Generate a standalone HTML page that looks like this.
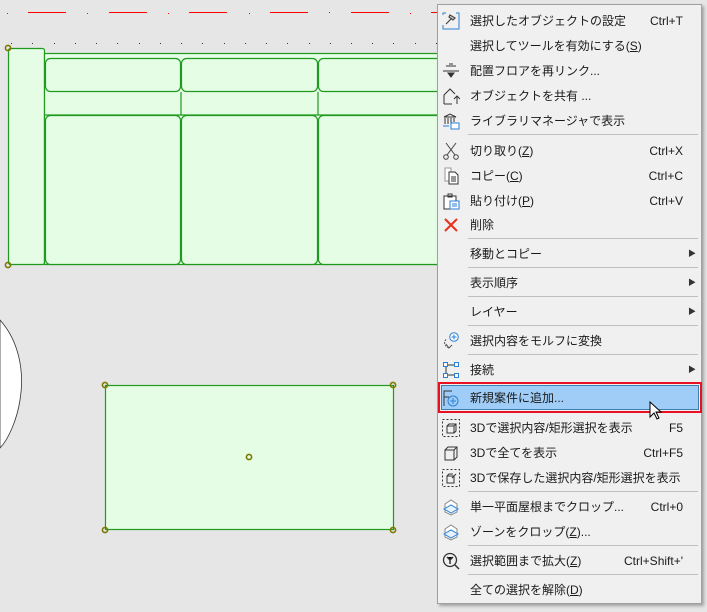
<!DOCTYPE html>
<html><head><meta charset="utf-8"><style>
*{margin:0;padding:0;box-sizing:border-box}
body{width:707px;height:612px;background:#e6e6e6;position:relative;overflow:hidden;font-family:"Liberation Sans","Noto Sans CJK JP",sans-serif;font-size:12px;color:#1a1a1a}
#menu{position:absolute;left:437px;top:4px;width:265px;height:600px;background:#f0f0f0;border:1px solid #a0a0a0;box-shadow:2px 2px 3px rgba(0,0,0,.3)}
.it{position:absolute;left:0;width:263px;height:24px;line-height:24px}
.it .t{position:absolute;left:32px}
.it .k{position:absolute;right:18px}
.it .a{position:absolute;right:5px;top:0;font-size:8px;color:#333}
.sep{position:absolute;left:30px;right:3px;height:1px;background:#bfbfbf}
.ic{position:absolute;left:4px;top:3px;width:18px;height:18px}
u{text-decoration:underline}
#hl{position:absolute;left:0;top:377px;width:264px;height:31px;border:2px solid #e81123}
#hl div{position:absolute;left:1px;top:1px;right:1px;bottom:1px;background:#9fcdf8;border:1px solid #3c7fb1}
</style></head><body>
<svg width="707" height="612" style="position:absolute;left:0;top:0">
<g stroke="#ff0000" stroke-width="1">
<line x1="28" y1="12.5" x2="66" y2="12.5"/><line x1="109" y1="12.5" x2="147" y2="12.5"/><line x1="189" y1="12.5" x2="227" y2="12.5"/><line x1="270" y1="12.5" x2="308" y2="12.5"/><line x1="351" y1="12.5" x2="389" y2="12.5"/><line x1="431" y1="12.5" x2="437" y2="12.5"/>
</g>
<g fill="#ff0000"><rect x="7" y="13" width="1" height="1"/><rect x="87" y="13" width="1" height="1"/><rect x="168" y="13" width="1" height="1"/><rect x="249" y="13" width="1" height="1"/><rect x="329" y="12" width="1" height="1"/><rect x="410" y="13" width="1" height="1"/></g>
<g fill="#333"><rect x="11" y="43" width="1" height="1"/><rect x="32" y="43" width="1" height="1"/><rect x="54" y="43" width="1" height="1"/><rect x="75" y="43" width="1" height="1"/><rect x="96" y="43" width="1" height="1"/><rect x="117" y="43" width="1" height="1"/><rect x="139" y="43" width="1" height="1"/><rect x="160" y="43" width="1" height="1"/><rect x="181" y="43" width="1" height="1"/><rect x="202" y="43" width="1" height="1"/><rect x="224" y="43" width="1" height="1"/><rect x="245" y="43" width="1" height="1"/><rect x="266" y="43" width="1" height="1"/><rect x="287" y="43" width="1" height="1"/><rect x="309" y="43" width="1" height="1"/><rect x="330" y="43" width="1" height="1"/><rect x="351" y="43" width="1" height="1"/><rect x="372" y="43" width="1" height="1"/><rect x="393" y="43" width="1" height="1"/><rect x="415" y="43" width="1" height="1"/><rect x="436" y="43" width="1" height="1"/></g>
<g fill="#e4fde4" stroke="#1f9a1f" stroke-width="1.2">
<rect x="8.5" y="48.5" width="36" height="216" rx="2"/>
<rect x="44.5" y="53.5" width="400" height="211"/>
<rect x="45.5" y="58.5" width="135" height="33" rx="5"/>
<rect x="181.5" y="58.5" width="136" height="33" rx="5"/>
<rect x="318.5" y="58.5" width="130" height="33" rx="5"/>
<line x1="45" y1="115" x2="437" y2="115"/>
<line x1="181" y1="92" x2="181" y2="115"/><line x1="318" y1="92" x2="318" y2="115"/>
<rect x="45.5" y="115.5" width="135" height="149" rx="5"/>
<rect x="181.5" y="115.5" width="136" height="149" rx="5"/>
<rect x="318.5" y="115.5" width="130" height="149" rx="5"/>
<rect x="105.5" y="385.5" width="288" height="144"/>
</g>
<g fill="none" stroke="#7a7a00" stroke-width="1.6">
<circle cx="8" cy="48" r="2.6"/><circle cx="8" cy="265" r="2.6"/>
<circle cx="105" cy="385" r="2.6"/><circle cx="393" cy="385" r="2.6"/><circle cx="105" cy="530" r="2.6"/><circle cx="393" cy="530" r="2.6"/><circle cx="249" cy="457" r="2.6"/>
</g>
<path d="M0,320 C18,340 25,370 20,400 C17,420 8,440 0,448 L0,320Z" fill="#fff" stroke="#333" stroke-width="0.8"/>
</svg>
<div id="menu">
<div id="hl"><div></div></div>
<div class="it" style="top:4px"><svg class="ic" viewBox="0 0 18 18"><path d="M1 3V1h3M14 1h3v16H1v-4" fill="none" stroke="#2b7fd6"/><path d="M4 12l6-6M8 3l5 3-2 2-4-3z" stroke="#444" fill="#ddd" stroke-width="1.2"/></svg><span class="t">選択したオブジェクトの設定</span><span class="k">Ctrl+T</span></div>
<div class="it" style="top:29px"><span class="t">選択してツールを有効にする(<u>S</u>)</span></div>
<div class="it" style="top:54px"><svg class="ic" viewBox="0 0 18 18"><path d="M1 9h16M4 4h10M7 2h4M6 11h6l-3 4z" stroke="#333" fill="#333"/></svg><span class="t">配置フロアを再リンク...</span></div>
<div class="it" style="top:79px"><svg class="ic" viewBox="0 0 18 18"><path d="M2 17V8l6-6 5 5M2 17h8M15 17V9M12 12l3-3 3 3" fill="none" stroke="#333"/></svg><span class="t">オブジェクトを共有 ...</span></div>
<div class="it" style="top:104px"><svg class="ic" viewBox="0 0 18 18"><path d="M2 5l6-3 6 3zM3 6v6M6 6v6M9 6v6M12 6v4" stroke="#333" fill="none"/><rect x="9" y="11" width="8" height="6" fill="#fff" stroke="#2b7fd6"/><path d="M1 14h6" stroke="#2b7fd6"/></svg><span class="t">ライブラリマネージャで表示</span></div>
<div class="sep" style="top:129px"></div>
<div class="it" style="top:134px"><svg class="ic" viewBox="0 0 18 18"><path d="M4 1l9 12M14 1L5 13" stroke="#444"/><circle cx="4" cy="15" r="2.3" fill="none" stroke="#444"/><circle cx="14" cy="15" r="2.3" fill="none" stroke="#444"/></svg><span class="t">切り取り(<u>Z</u>)</span><span class="k">Ctrl+X</span></div>
<div class="it" style="top:159px"><svg class="ic" viewBox="0 0 18 18"><path d="M3 1h6v13H3z" fill="#fff" stroke="#999"/><path d="M7 5h6l3 3v9H7z" fill="#fff" stroke="#333"/><path d="M9 10h5M9 12h5M9 14h5" stroke="#333"/></svg><span class="t">コピー(<u>C</u>)</span><span class="k">Ctrl+C</span></div>
<div class="it" style="top:184px"><svg class="ic" viewBox="0 0 18 18"><path d="M2 4h12v13H2z M6 2h4v3H6z" fill="#fff" stroke="#333"/><rect x="8" y="9" width="9" height="8" fill="#fff" stroke="#2b7fd6"/><path d="M10 12h5M10 14h5" stroke="#2b7fd6"/></svg><span class="t">貼り付け(<u>P</u>)</span><span class="k">Ctrl+V</span></div>
<div class="it" style="top:208px"><svg class="ic" viewBox="0 0 18 18"><path d="M3 3l12 12M15 3L3 15" stroke="#e8301c" stroke-width="2"/></svg><span class="t">削除</span></div>
<div class="sep" style="top:233px"></div>
<div class="it" style="top:237px"><span class="t">移動とコピー</span><span class="a">▶</span></div>
<div class="sep" style="top:262px"></div>
<div class="it" style="top:266px"><span class="t">表示順序</span><span class="a">▶</span></div>
<div class="sep" style="top:291px"></div>
<div class="it" style="top:295px"><span class="t">レイヤー</span><span class="a">▶</span></div>
<div class="sep" style="top:320px"></div>
<div class="it" style="top:324px"><svg class="ic" viewBox="0 0 18 18"><path d="M7 16C2 14 1 9 5 7" fill="none" stroke="#555" stroke-dasharray="2 1"/><path d="M4 12l3 4 3-3" fill="none" stroke="#555"/><circle cx="12" cy="5" r="4.3" fill="#fff" stroke="#2b7fd6"/><path d="M12 2.5v5M9.5 5h5" stroke="#2b7fd6"/></svg><span class="t">選択内容をモルフに変換</span></div>
<div class="sep" style="top:349px"></div>
<div class="it" style="top:353px"><svg class="ic" viewBox="0 0 18 18"><path d="M4 4h10M4 14h10M4 4v10M14 4v2" stroke="#333" fill="none"/><g fill="#fff" stroke="#2b7fd6"><rect x="1.5" y="1.5" width="4" height="4"/><rect x="12.5" y="1.5" width="4" height="4"/><rect x="1.5" y="12.5" width="4" height="4"/><rect x="12.5" y="12.5" width="4" height="4"/></g></svg><span class="t">接続</span><span class="a">▶</span></div>
<div class="it" style="top:381px"><svg class="ic" viewBox="0 0 18 18"><path d="M2 17V2h8M2 8h5" fill="none" stroke="#333"/><circle cx="11" cy="12" r="5" fill="none" stroke="#2b7fd6"/><path d="M11 9v6M8 12h6" stroke="#2b7fd6"/></svg><span class="t">新規案件に追加...</span></div>
<div class="sep" style="top:407px;display:none"></div>
<div class="it" style="top:411px"><svg class="ic" viewBox="0 0 18 18"><rect x="0.5" y="0.5" width="17" height="17" fill="none" stroke="#333" stroke-dasharray="2 2"/><path d="M5 7h7v7H5zM5 7l2-2h7v7l-2 2M12 7l2-2" fill="none" stroke="#333"/></svg><span class="t">3Dで選択内容/矩形選択を表示</span><span class="k">F5</span></div>
<div class="it" style="top:436px"><svg class="ic" viewBox="0 0 18 18"><path d="M3 6h9v10H3zM3 6l3-3h9v10l-3 3M12 6l3-3" fill="none" stroke="#333"/></svg><span class="t">3Dで全てを表示</span><span class="k">Ctrl+F5</span></div>
<div class="it" style="top:461px"><svg class="ic" viewBox="0 0 18 18"><rect x="0.5" y="0.5" width="17" height="17" fill="none" stroke="#333" stroke-dasharray="2 2"/><path d="M5 7h7v7H5zM5 7l2-2h4M14 5l-4 4" fill="none" stroke="#333"/></svg><span class="t">3Dで保存した選択内容/矩形選択を表示</span></div>
<div class="sep" style="top:486px"></div>
<div class="it" style="top:490px"><svg class="ic" viewBox="0 0 18 18"><path d="M3 6l6-4 6 4v8l-6 3-6-3z" fill="#fff" stroke="#888"/><path d="M2 11l7-4 7 4-7 4z" fill="#e8f2fc" stroke="#2b7fd6"/></svg><span class="t">単一平面屋根までクロップ...</span><span class="k">Ctrl+0</span></div>
<div class="it" style="top:515px"><svg class="ic" viewBox="0 0 18 18"><path d="M3 6l6-4 6 4v8l-6 3-6-3z" fill="#fff" stroke="#888"/><path d="M2 11l7-4 7 4-7 4z" fill="#e8f2fc" stroke="#2b7fd6"/></svg><span class="t">ゾーンをクロップ(<u>Z</u>)...</span></div>
<div class="sep" style="top:540px"></div>
<div class="it" style="top:544px"><svg class="ic" viewBox="0 0 18 18"><circle cx="8" cy="8" r="6.5" fill="none" stroke="#333" stroke-width="1.3"/><path d="M13 13l4 4" stroke="#333" stroke-width="1.5"/><path d="M5 5l3 3 3-3M8 8v4" stroke="#333" stroke-width="1.5"/></svg><span class="t">選択範囲まで拡大(<u>Z</u>)</span><span class="k">Ctrl+Shift+'</span></div>
<div class="sep" style="top:569px"></div>
<div class="it" style="top:573px"><span class="t">全ての選択を解除(<u>D</u>)</span></div>
</div>
<svg width="14" height="22" style="position:absolute;left:649px;top:401px"><path d="M1 1v15l4-4 3 6 2-1-3-6h5z" fill="#fff" stroke="#000"/></svg>
</body></html>
